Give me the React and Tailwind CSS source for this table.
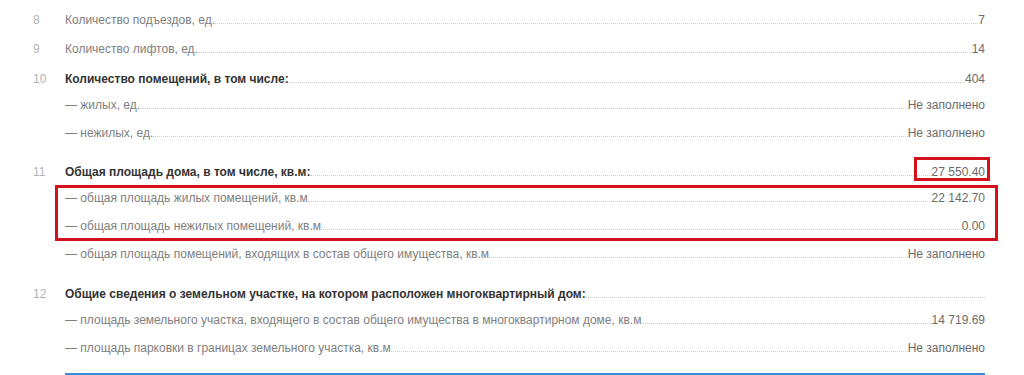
const groups = [
  { mt: "mt-[7px]", num: "8", title: "Количество подъездов, ед.", value: "7" },
  { mt: "mt-[3px]", num: "9", title: "Количество лифтов, ед.", value: "14" },
  {
    mt: "mt-[5px]",
    num: "10",
    title: "Количество помещений, в том числе:",
    bold: true,
    value: "404",
    items: [
      { title: "— жилых, ед.", value: "Не заполнено" },
      { title: "— нежилых, ед.", value: "Не заполнено" },
    ],
  },
  {
    mt: "mt-[13px]",
    num: "11",
    title: "Общая площадь дома, в том числе, кв.м:",
    bold: true,
    value: "27 550.40",
    mark: true,
    items: [
      { title: "— общая площадь жилых помещений, кв.м", value: "22 142.70", boxed: true },
      { title: "— общая площадь нежилых помещений, кв.м", value: "0.00", boxed: true },
      { title: "— общая площадь помещений, входящих в состав общего имущества, кв.м", value: "Не заполнено" },
    ],
  },
  {
    mt: "mt-[14px]",
    num: "12",
    title: "Общие сведения о земельном участке, на котором расположен многоквартирный дом:",
    bold: true,
    items: [
      { title: "— площадь земельного участка, входящего в состав общего имущества в многоквартирном доме, кв.м", value: "14 719.69" },
      { title: "— площадь парковки в границах земельного участка, кв.м", value: "Не заполнено" },
    ],
  },
];

function Row({ num, title, value, bold, mark, height }) {
  return (
    <div className={`flex items-center ${height}`}>
      <div className="w-[32px] shrink-0 text-[12px] leading-[14px] text-[#b3b3b3]">{num}</div>
      <div className="flex flex-1 items-end leading-[14px] text-[12px]">
        <span className={bold ? "font-bold text-[#333333]" : "text-[#808080]"}>{title}</span>
        <span className="mb-[3px] h-px flex-1 border-b border-dotted border-[#cfcfcf]" />
        {value && (
          <span className="relative text-[#6b6b6b]">
            {value}
            {mark && (
              <span className="absolute -left-[18px] -right-[5px] -top-[8px] -bottom-[2px] border-[3px] border-[#d4121b]" />
            )}
          </span>
        )}
      </div>
    </div>
  );
}

export default function App() {
  return (
    <div className="w-[1024px] h-[375px] overflow-hidden bg-white pl-[33px] pr-[39px]" style={{ fontFamily: '"Liberation Sans", Arial, sans-serif' }}>
      {groups.map((g) => {
        const boxed = (g.items || []).filter((i) => i.boxed);
        const rest = (g.items || []).filter((i) => !i.boxed);
        return (
          <div key={g.num} className={g.mt}>
            <Row num={g.num} title={g.title} value={g.value} bold={g.bold} mark={g.mark} height={g.items ? "h-[24px]" : "h-[26px]"} />
            {boxed.length > 0 && (
              <div className="relative">
                {boxed.map((it) => (
                  <Row key={it.title} title={it.title} value={it.value} height="h-[28px]" />
                ))}
                <div className="absolute left-[22px] -right-[13px] top-px -bottom-[1px] border-[3px] border-[#d4121b]" />
              </div>
            )}
            {rest.map((it) => (
              <Row key={it.title} title={it.title} value={it.value} height="h-[28px]" />
            ))}
          </div>
        );
      })}
      <div className="ml-[32px] mt-[11px] h-[3px] bg-[#3a8dd5]" />
    </div>
  );
}
